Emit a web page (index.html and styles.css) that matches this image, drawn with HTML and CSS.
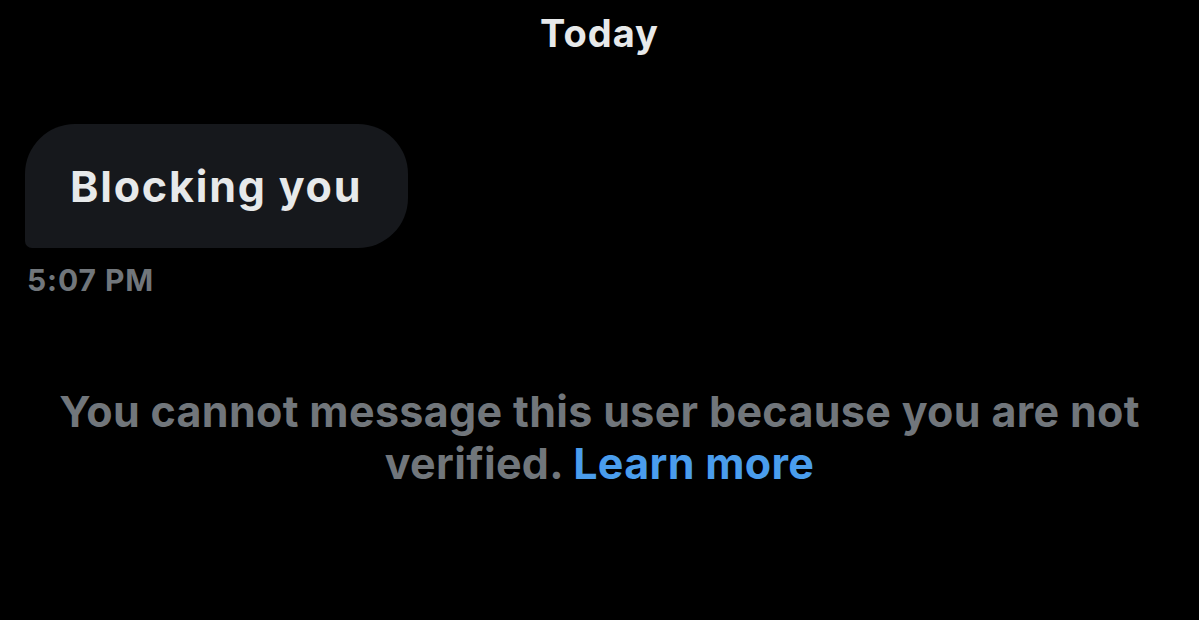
FILE: index.html
```html
<!DOCTYPE html>
<html>
<head>
<meta charset="utf-8">
<link rel="stylesheet" href="styles.css">
</head>
<body>
<div class="chat">
  <div class="day">Today</div>
  <div class="msg">
    <div class="bubble">Blocking you</div>
    <div class="time">5:07 PM</div>
  </div>
  <p class="notice">You cannot message this user because you are not verified. <a class="link" href="#">Learn more</a></p>
</div>
</body>
</html>
```
FILE: styles.css
```css
html, body {
  margin: 0;
  padding: 0;
  background: #000;
}
body {
  width: 1199px;
  height: 620px;
  overflow: hidden;
  font-family: Inter, "Liberation Sans", sans-serif;
  font-weight: 700;
}
.chat {
  display: flex;
  flex-direction: column;
}
.day {
  color: #e7e9ea;
  font-size: 38px;
  line-height: 44px;
  letter-spacing: 1px;
  text-align: center;
  padding-top: 11px;
}
.msg {
  display: flex;
  flex-direction: column;
  align-items: flex-start;
  padding-left: 25px;
  margin-top: 69px;
}
.bubble {
  background: #16181c;
  color: #e7e9ea;
  font-size: 43px;
  line-height: 48px;
  letter-spacing: 1.8px;
  padding: 38px 46px 38px 45px;
  border-radius: 50px 50px 50px 7px;
}
.time {
  color: #71767b;
  font-size: 30px;
  line-height: 36px;
  margin-top: 14px;
  padding-left: 2px;
  letter-spacing: 0.9px;
}
.notice {
  color: #71767b;
  font-size: 43px;
  line-height: 52px;
  letter-spacing: 0.33px;
  text-align: center;
  margin: 87px 0 0;
  padding: 0 30px;
}
.link {
  color: #4a9ded;
  text-decoration: none;
}
```
